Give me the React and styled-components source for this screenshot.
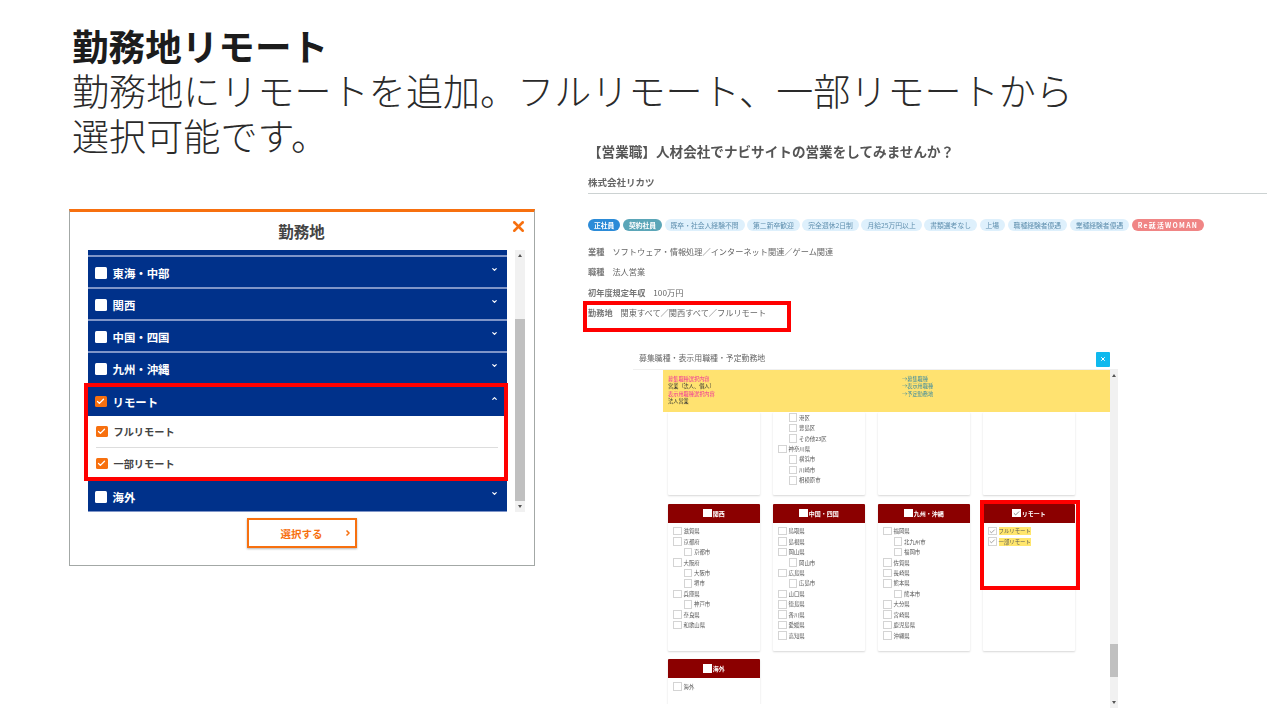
import styled, { createGlobalStyle } from "styled-components";
import { Check, ChevronDown, ChevronUp, ChevronRight, X } from "lucide-react";

const navy = "#00318a";
const orange = "#f7700f";

const GlobalStyle = createGlobalStyle`
  html, body {
    margin: 0;
    background: #fff;
    font-family: "Noto Sans CJK JP", "Noto Sans", sans-serif;
  }
`;

const Slide = styled.div`
  position: relative;
  width: 1280px;
  height: 720px;
  overflow: hidden;
  background: #fff;
  padding: 23px 0 0 72px;
  box-sizing: border-box;
`;

const Heading = styled.h1`
  margin: 0;
  font-size: 36.6px;
  line-height: 45.5px;
  font-weight: 700;
  color: #1c1c1c;
`;

const Lead = styled.p`
  margin: -1px 0 0;
  font-size: 37px;
  letter-spacing: 0.1px;
  line-height: 45.5px;
  font-weight: 300;
  color: #2a2a2a;
`;

const Highlight = styled.div`
  position: absolute;
  left: ${(p) => p.$x}px;
  top: ${(p) => p.$y}px;
  width: ${(p) => p.$w}px;
  height: ${(p) => p.$h}px;
  border: 4px solid #f00;
  box-sizing: border-box;
  pointer-events: none;
`;

/* left picture: region modal */
const Modal = styled.section`
  position: absolute;
  left: 69px;
  top: 209px;
  width: 466px;
  height: 357px;
  box-sizing: border-box;
  border: 1px solid #a3a8a6;
  border-top: 3px solid ${orange};
  padding: 0 9px 0 18px;
  background: #fff;
`;

const ModalHead = styled.header`
  position: relative;
  height: 38px;
  display: flex;
  align-items: center;
  justify-content: center;
  font-size: 15.5px;
  font-weight: 700;
  color: #444;
  padding-right: 10px;
  box-sizing: border-box;
`;

const CloseMark = styled.span`
  position: absolute;
  right: -2px;
  top: 6px;
  display: flex;
  color: ${orange};
`;

const ModalBody = styled.div`
  display: flex;
  gap: 8px;
  height: 262px;
`;

const RegionList = styled.div`
  flex: 1;
  display: flex;
  flex-direction: column;
  gap: 2px;
  background: #7f95c8;
  overflow: hidden;
  border-bottom: 1px solid #7f95c8;
`;

const RegionStub = styled.div`
  height: 5px;
  background: ${navy};
`;

const RegionRow = styled.div`
  display: flex;
  align-items: center;
  height: ${(p) => (p.$open ? 31 : 30)}px;
  flex: none;
  box-sizing: border-box;
  padding: 2px 9px 0 7px;
  gap: 6px;
  background: ${navy};
  color: #fff;
  font-size: 11.4px;
  font-weight: 700;
`;

const RowChevron = styled.span`
  margin-left: auto;
  display: flex;
  margin-top: -7px;
`;

const Tick = styled.span`
  width: 11.5px;
  height: 11.5px;
  flex: none;
  border-radius: 1.5px;
  display: flex;
  align-items: center;
  justify-content: center;
  background: ${(p) => (p.$on ? orange : "#fff")};
  color: #fff;
`;

const SubPanel = styled.div`
  height: 63px;
  flex: none;
  margin-top: -2px;
  background: #fff;
  padding: 0 9px 0 8px;
`;

const SubItem = styled.div`
  display: flex;
  align-items: center;
  gap: 6px;
  height: 31px;
  font-size: 10.2px;
  font-weight: 700;
  color: #444;
  & + & {
    border-top: 1px solid #ddd;
  }
`;

const ScrollTrack = styled.div`
  width: ${(p) => p.$w}px;
  flex: none;
  background: #f1f1f1;
  display: flex;
  flex-direction: column;
  align-items: center;
`;

const ScrollArrow = styled.span`
  flex: none;
  margin: 4px 0;
  width: 0;
  height: 0;
  border-left: 2.5px solid transparent;
  border-right: 2.5px solid transparent;
  border-${(p) => (p.$down ? "top" : "bottom")}: 3px solid #555;
`;

const ScrollSpace = styled.div`
  flex: ${(p) => p.$grow} 0 0;
`;

const ScrollThumb = styled.div`
  flex: ${(p) => p.$grow} 0 0;
  width: 100%;
  background: #c0c0c0;
`;

const ModalFoot = styled.div`
  display: flex;
  justify-content: center;
  padding: 6px 10px 0 0;
`;

const SelectButton = styled.button`
  position: relative;
  width: 110px;
  height: 30px;
  border: 2px solid ${orange};
  background: #fff;
  color: ${orange};
  font: 700 10.5px "Noto Sans CJK JP", sans-serif;
  box-shadow: 0 1px 2px rgba(0, 0, 0, 0.3);
  padding: 0;
`;

const ButtonArrow = styled.span`
  position: absolute;
  right: 3px;
  top: 9px;
  display: flex;
`;

/* right picture: job detail */
const JobCard = styled.section`
  position: absolute;
  left: 588px;
  top: 141px;
  width: 679px;
  color: #666;
  filter: blur(0.25px);
`;

const JobTitle = styled.h2`
  margin: 0;
  font-size: 13.6px;
  line-height: 20px;
  font-weight: 700;
  color: #555;
`;

const Company = styled.div`
  margin-top: 13px;
  padding-bottom: 3px;
  height: 16px;
  line-height: 16px;
  font-size: 9.5px;
  font-weight: 700;
  color: #666;
  border-bottom: 1.5px solid #ccd2d2;
`;

const TagRow = styled.div`
  display: flex;
  gap: 2.5px;
  margin-top: 25px;
`;

const tagColors = {
  main: ["#2b8bd8", "#fff"],
  contract: ["#5ba6b8", "#fff"],
  plain: ["#def0fc", "#5f8fae"],
  woman: ["#f08585", "#fff"],
};

const Tag = styled.span`
  height: 12px;
  line-height: 12px;
  padding: 0 6px;
  border-radius: 6px;
  font-size: 6.8px;
  white-space: nowrap;
  font-weight: ${(p) => (p.$kind === "plain" ? 400 : 700)};
  letter-spacing: ${(p) => (p.$kind === "woman" ? "1.3px" : 0)};
  background: ${(p) => tagColors[p.$kind][0]};
  color: ${(p) => tagColors[p.$kind][1]};
`;

const SpecList = styled.dl`
  margin: 14px 0 0;
  display: flex;
  flex-direction: column;
  gap: 8.3px;
`;

const SpecRow = styled.div`
  display: flex;
  gap: 8px;
  height: 12px;
  line-height: 12px;
  font-size: 8.2px;
`;

const SpecName = styled.dt`
  font-weight: 700;
  color: #777;
`;

const SpecValue = styled.dd`
  margin: 0;
`;

/* right picture: region picker window */
const Picker = styled.section`
  position: absolute;
  left: 633px;
  top: 345px;
  width: 485px;
  height: 363px;
  background: #fff;
  filter: blur(0.25px);
`;

const PickerHead = styled.header`
  height: 25px;
  box-sizing: border-box;
  padding: 0 8px 0 6px;
  display: flex;
  align-items: center;
  justify-content: space-between;
  font-size: 7.9px;
  color: #666;
  border-bottom: 1px solid #f0f0f0;
`;

const PickerClose = styled.span`
  width: 14px;
  height: 15px;
  margin-top: 4px;
  display: flex;
  align-items: center;
  justify-content: center;
  background: #0fb9ee;
  color: #fff;
  border-radius: 1px;
`;

const PickerBody = styled.div`
  display: flex;
  height: 338px;
`;

const PickerMain = styled.div`
  flex: 1;
  padding-left: 30px;
`;

const Notice = styled.div`
  height: 42px;
  background: #ffe270;
  box-sizing: border-box;
  padding: 4.5px 0 0 5px;
  display: grid;
  grid-template-columns: 234px 1fr;
  font-size: 5.2px;
  line-height: 7.6px;
`;

const NoticeLine = styled.div`
  color: ${(p) => (p.$pink ? "#f0309a" : "#333")};
`;

const NoticeLink = styled.div`
  color: #3a8aa0;
`;

const CardGrid = styled.div`
  display: grid;
  grid-template-columns: repeat(4, 92px);
  grid-template-rows: 83px 147px 60px;
  gap: 8.5px 13px;
  padding: 0 4px 0 5px;
  height: 292px;
  overflow: hidden;
`;

const AreaCard = styled.article`
  background: #fff;
  box-shadow: 0 1px 2px rgba(0, 0, 0, 0.16);
  border-radius: 1px;
  overflow: hidden;
`;

const AreaTitle = styled.h3`
  margin: 0;
  height: 19px;
  display: flex;
  align-items: center;
  justify-content: center;
  gap: 1px;
  background: #8b0000;
  color: #fff;
  font-size: 6px;
  font-weight: 700;
`;

const AreaItems = styled.div`
  padding: ${(p) => (p.$first ? 0.5 : 3.5)}px 0 0 5px;
`;

const AreaItem = styled.div`
  display: flex;
  align-items: center;
  gap: 2px;
  height: 10.45px;
  font-size: 5.4px;
  color: #555;
  padding-left: ${(p) => (p.$sub ? 10.5 : 0)}px;
`;

const MiniBox = styled.span`
  width: 8.5px;
  height: 8.5px;
  flex: none;
  display: flex;
  align-items: center;
  justify-content: center;
  box-sizing: border-box;
  background: #fff;
  border: ${(p) => (p.$bare ? "none" : "1px solid #d4d4d4")};
  color: #777;
`;

const Marked = styled.span`
  background: ${(p) => (p.$mark ? "#ffe66d" : "transparent")};
`;

const regions = ["東海・中部", "関西", "中国・四国", "九州・沖縄"];

const tags = [
  ["正社員", "main"],
  ["契約社員", "contract"],
  ["既卒・社会人経験不問", "plain"],
  ["第二新卒歓迎", "plain"],
  ["完全週休2日制", "plain"],
  ["月給25万円以上", "plain"],
  ["書類選考なし", "plain"],
  ["上場", "plain"],
  ["職種経験者優遇", "plain"],
  ["業種経験者優遇", "plain"],
  ["Re就活WOMAN", "woman"],
];

const specs = [
  ["業種", "ソフトウェア・情報処理／インターネット関連／ゲーム関連"],
  ["職種", "法人営業"],
  ["初年度規定年収", "100万円"],
  ["勤務地", "関東すべて／関西すべて／フルリモート"],
];

// "-" prefix = indented city row
const areas = [
  { items: [] },
  { items: ["-港区", "-豊島区", "-その他23区", "神奈川県", "-横浜市", "-川崎市", "-相模原市"] },
  { items: [] },
  { items: [] },
  { name: "関西", items: ["滋賀県", "京都府", "-京都市", "大阪府", "-大阪市", "-堺市", "兵庫県", "-神戸市", "奈良県", "和歌山県"] },
  { name: "中国・四国", items: ["鳥取県", "島根県", "岡山県", "-岡山市", "広島県", "-広島市", "山口県", "徳島県", "香川県", "愛媛県", "高知県"] },
  { name: "九州・沖縄", items: ["福岡県", "-北九州市", "-福岡市", "佐賀県", "長崎県", "熊本県", "-熊本市", "大分県", "宮崎県", "鹿児島県", "沖縄県"] },
  { name: "リモート", checked: true, items: ["フルリモート", "一部リモート"] },
  { name: "海外", items: ["海外"] },
];

const AreaBlock = ({ area }) => (
  <AreaCard>
    {area.name && (
      <AreaTitle>
        <MiniBox $bare>{area.checked && <Check size={7} strokeWidth={3} />}</MiniBox>
        {area.name}
      </AreaTitle>
    )}
    <AreaItems $first={!area.name}>
      {area.items.map((item) => {
        const sub = item.startsWith("-");
        return (
          <AreaItem key={item} $sub={sub}>
            <MiniBox>{area.checked && <Check size={7} strokeWidth={2.5} />}</MiniBox>
            <Marked $mark={area.checked}>{sub ? item.slice(1) : item}</Marked>
          </AreaItem>
        );
      })}
    </AreaItems>
  </AreaCard>
);

const App = () => {
  return (
    <>
      <GlobalStyle />
      <Slide>
        <Heading>勤務地リモート</Heading>
        <Lead>
          勤務地にリモートを追加。フルリモート、一部リモートから
          <br />
          選択可能です。
        </Lead>

        <Modal>
          <ModalHead>
            勤務地
            <CloseMark>
              <X size={17} strokeWidth={3.6} />
            </CloseMark>
          </ModalHead>
          <ModalBody>
            <RegionList>
              <RegionStub />
              {regions.map((name) => (
                <RegionRow key={name}>
                  <Tick />
                  {name}
                  <RowChevron>
                    <ChevronDown size={7} strokeWidth={4} />
                  </RowChevron>
                </RegionRow>
              ))}
              <RegionRow $open>
                <Tick $on>
                  <Check size={9} strokeWidth={3.5} />
                </Tick>
                リモート
                <RowChevron>
                  <ChevronUp size={7} strokeWidth={4} />
                </RowChevron>
              </RegionRow>
              <SubPanel>
                <SubItem>
                  <Tick $on>
                    <Check size={9} strokeWidth={3.5} />
                  </Tick>
                  フルリモート
                </SubItem>
                <SubItem>
                  <Tick $on>
                    <Check size={9} strokeWidth={3.5} />
                  </Tick>
                  一部リモート
                </SubItem>
              </SubPanel>
              <RegionRow>
                <Tick />
                海外
                <RowChevron>
                  <ChevronDown size={7} strokeWidth={4} />
                </RowChevron>
              </RegionRow>
            </RegionList>
            <ScrollTrack $w={10}>
              <ScrollArrow />
              <ScrollSpace $grow={58} />
              <ScrollThumb $grow={183} />
              <ScrollArrow $down />
            </ScrollTrack>
          </ModalBody>
          <ModalFoot>
            <SelectButton>
              選択する
              <ButtonArrow>
                <ChevronRight size={8} strokeWidth={5} />
              </ButtonArrow>
            </SelectButton>
          </ModalFoot>
          <Highlight $x={14} $y={171} $w={424} $h={98} />
        </Modal>

        <JobCard>
          <JobTitle>【営業職】人材会社でナビサイトの営業をしてみませんか？</JobTitle>
          <Company>株式会社リカツ</Company>
          <TagRow>
            {tags.map(([label, kind]) => (
              <Tag key={label} $kind={kind}>
                {label}
              </Tag>
            ))}
          </TagRow>
          <SpecList>
            {specs.map(([name, value]) => (
              <SpecRow key={name}>
                <SpecName>{name}</SpecName>
                <SpecValue>{value}</SpecValue>
              </SpecRow>
            ))}
          </SpecList>
        </JobCard>
        <Highlight $x={583} $y={301} $w={208} $h={31} />

        <Picker>
          <PickerHead>
            募集職種・表示用職種・予定勤務地
            <PickerClose>
              <X size={6} strokeWidth={4} />
            </PickerClose>
          </PickerHead>
          <PickerBody>
            <PickerMain>
              <Notice>
                <div>
                  <NoticeLine $pink>募集職種選択内容</NoticeLine>
                  <NoticeLine>営業（法人、個人）</NoticeLine>
                  <NoticeLine $pink>表示用職種選択内容</NoticeLine>
                  <NoticeLine>法人営業</NoticeLine>
                </div>
                <div>
                  <NoticeLink>→募集職種</NoticeLink>
                  <NoticeLink>→表示用職種</NoticeLink>
                  <NoticeLink>→予定勤務地</NoticeLink>
                </div>
              </Notice>
              <CardGrid>
                {areas.map((area, i) => (
                  <AreaBlock key={i} area={area} />
                ))}
              </CardGrid>
            </PickerMain>
            <ScrollTrack $w={8}>
              <ScrollArrow />
              <ScrollSpace $grow={266} />
              <ScrollThumb $grow={34} />
              <ScrollSpace $grow={20} />
              <ScrollArrow $down />
            </ScrollTrack>
          </PickerBody>
        </Picker>
        <Highlight $x={980} $y={500} $w={100} $h={90} />
      </Slide>
    </>
  );
};

export default App;
